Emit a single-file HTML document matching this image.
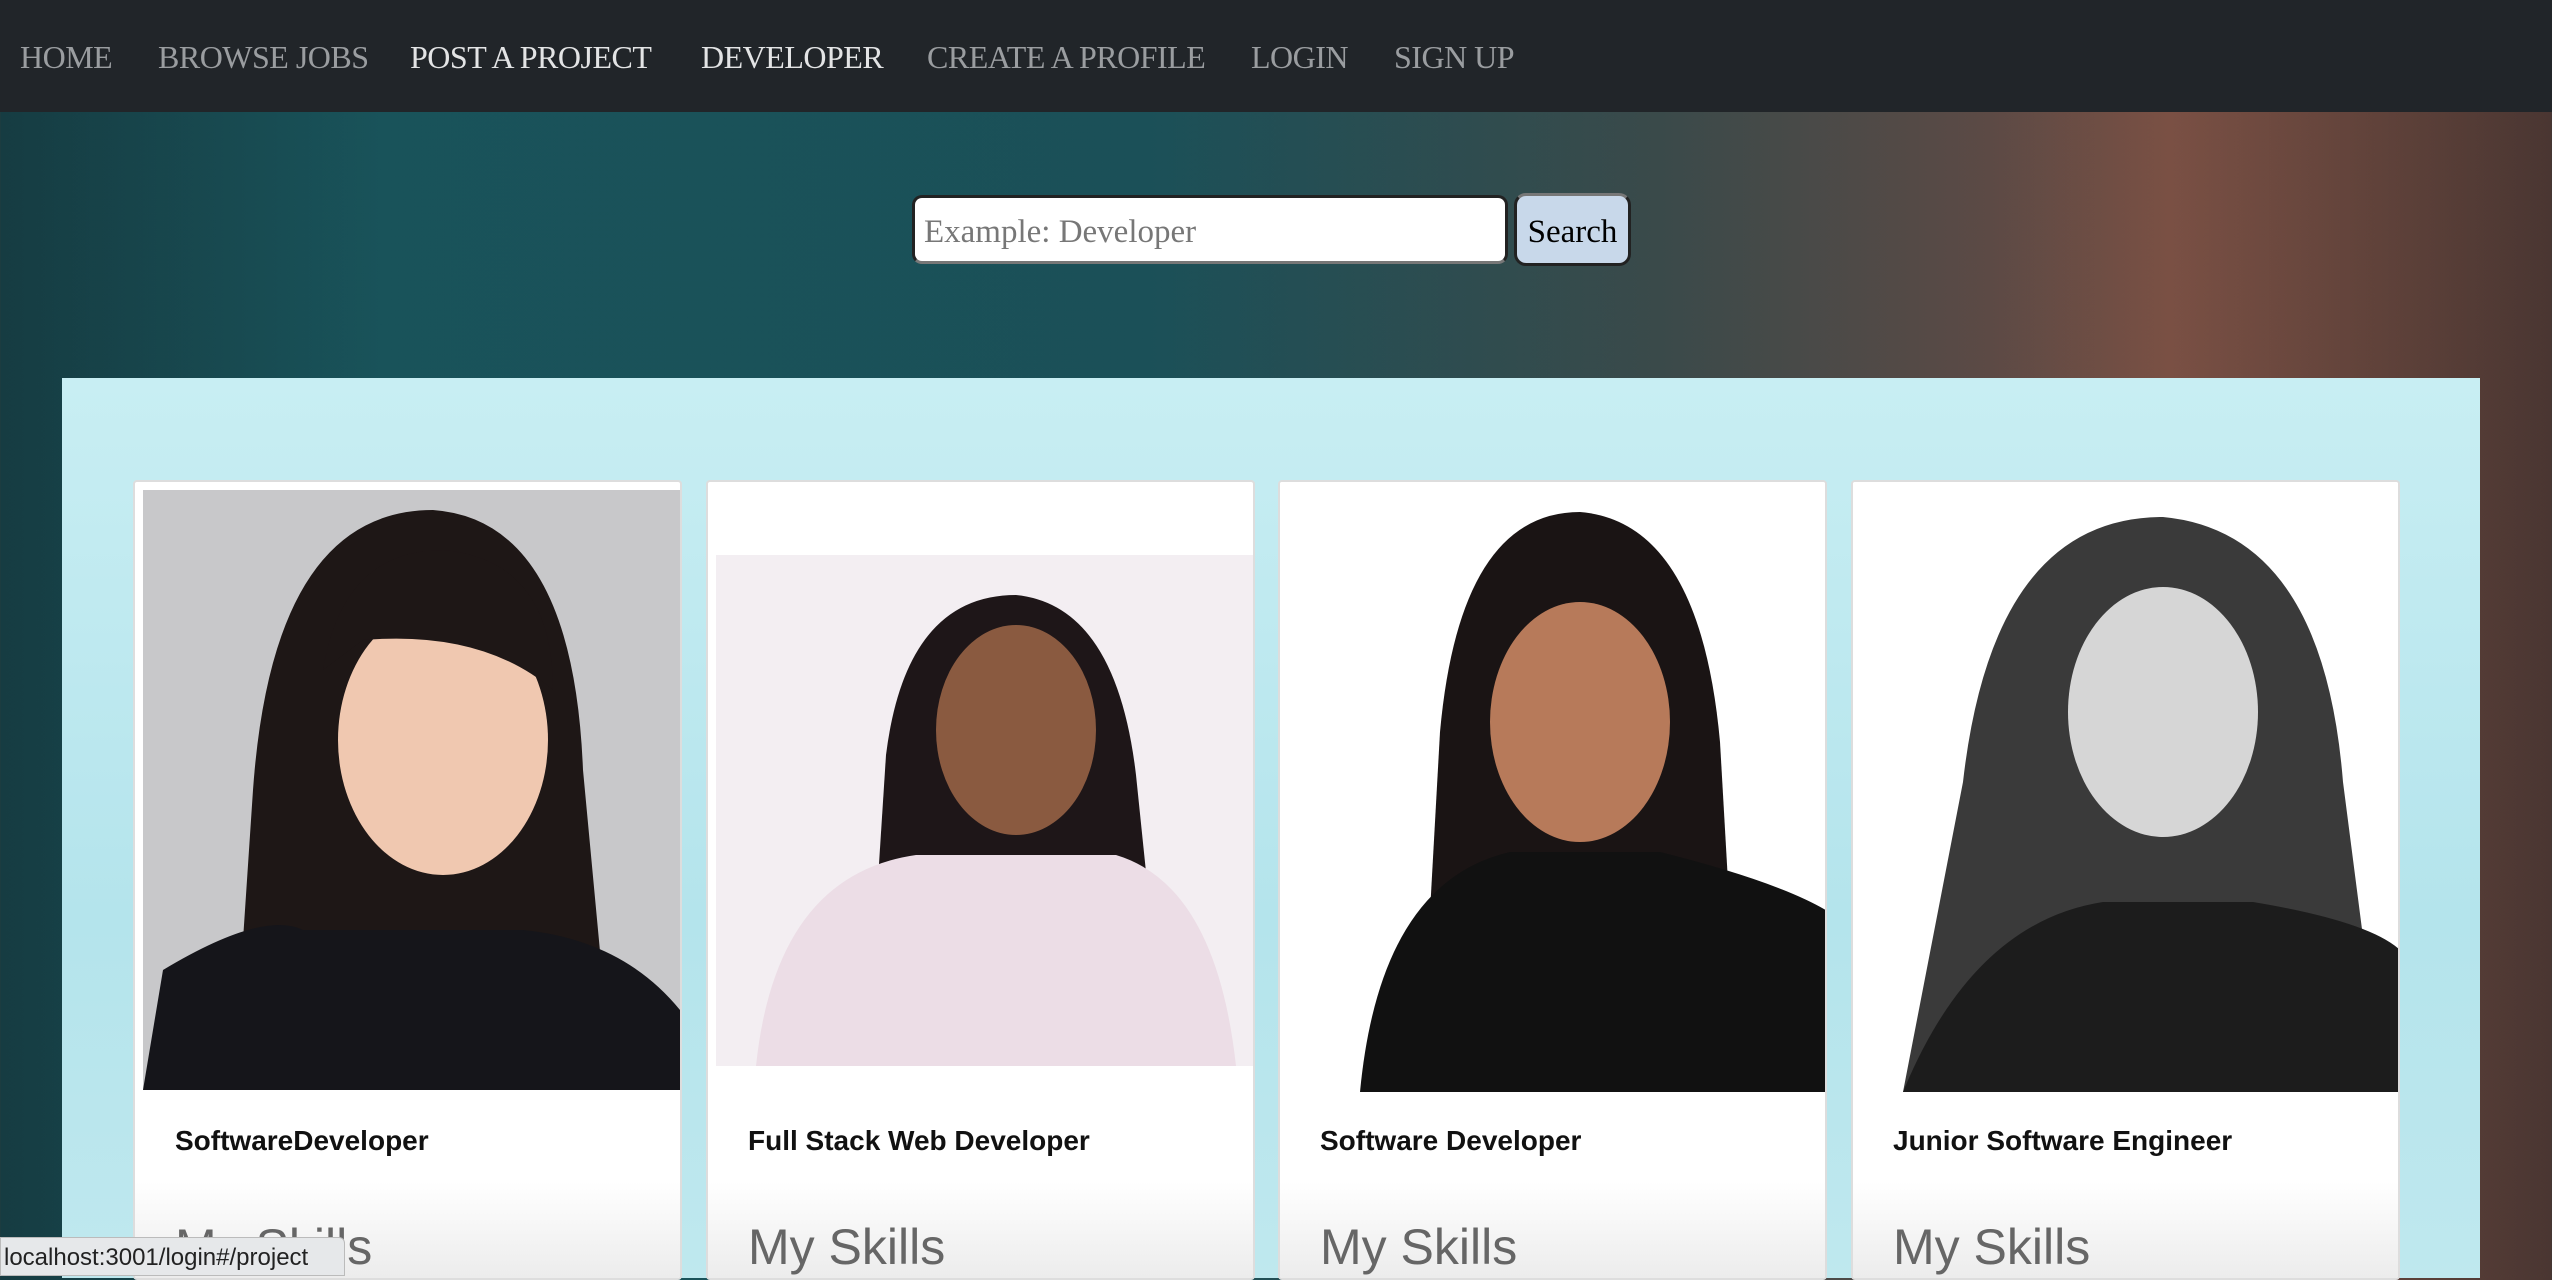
<!DOCTYPE html>
<html><head><style>
*{margin:0;padding:0;box-sizing:border-box}
body{width:2552px;height:1276px;overflow:hidden;position:relative;font-family:"Liberation Serif",serif;
background:linear-gradient(90deg,#163c42 0%,#19535a 15%,#1b5058 45%,#3a4a4a 65%,#5c4a45 78%,#7a5044 85%,#5a3f38 95%,#4a3632 100%);}
.nav{position:absolute;left:0;top:0;width:2552px;height:112px;background:#212529;}
.nav span{position:absolute;top:39px;font-size:32px;color:#9a9da0;letter-spacing:-0.5px}
.nav span.a{color:#e3e4e5}
.inp{position:absolute;left:912px;top:195px;width:596px;height:69px;background:#fff;border:3px solid #222;border-bottom-color:#777;border-radius:10px;font-size:33px;color:#777;padding:16px 0 0 9px}
.btn{position:absolute;left:1514px;top:193px;width:117px;height:73px;background:#c8d8ea;border:3px solid #222;border-top-color:#777;border-radius:12px;font-size:33px;color:#000;text-align:center;padding-top:18px}
.panel{position:absolute;left:62px;top:378px;width:2418px;height:900px;background:linear-gradient(180deg,#c8eef3,#b4e4ec 60%,#bfe8ee)}
.card{position:absolute;top:480px;width:549px;height:800px;background:#fff;border:2px solid #ddd;border-radius:4px;overflow:hidden}
.card .fade{position:absolute;left:0;right:0;top:700px;bottom:0;background:linear-gradient(180deg,#fff,#ececec)}
.t{position:absolute;left:40px;top:643px;font-family:"Liberation Sans",sans-serif;font-weight:bold;font-size:28px;color:#111}
.s{position:absolute;left:40px;top:736px;font-family:"Liberation Sans",sans-serif;font-size:50px;color:#666}
.img{position:absolute}
.status{position:absolute;left:0;top:1237px;width:345px;height:39px;background:#e6e8ea;border:1px solid #bbb;border-radius:0 6px 0 0;font-family:"Liberation Sans",sans-serif;font-size:24px;color:#222;padding:6px 0 0 3px}
</style></head><body>
<div class="nav">
<span style="left:20px">HOME</span>
<span style="left:158px">BROWSE JOBS</span>
<span class="a" style="left:410px">POST A PROJECT</span>
<span class="a" style="left:701px">DEVELOPER</span>
<span style="left:927px">CREATE A PROFILE</span>
<span style="left:1251px">LOGIN</span>
<span style="left:1394px">SIGN UP</span>
</div>
<div class="inp">Example: Developer</div>
<div class="btn">Search</div>
<div class="panel"></div>

<div class="card" style="left:133px">
<svg class="img" style="left:8px;top:8px" width="537" height="600" viewBox="0 0 537 600">
<rect width="537" height="600" fill="#c8c8ca"/>
<path d="M90 600 L110 300 Q130 20 290 20 Q430 30 440 280 L470 600Z" fill="#1e1716"/>
<path d="M0 600 L20 480 Q120 420 160 440 L380 440 Q480 450 537 520 L537 600Z" fill="#15151a"/>
<ellipse cx="300" cy="250" rx="105" ry="135" fill="#f0c8b0"/>
<path d="M180 180 Q200 60 300 60 Q410 70 410 200 Q340 140 220 150Z" fill="#1e1716"/>
</svg>
<div class="fade"></div>
<div class="t">SoftwareDeveloper</div><div class="s">My Skills</div></div>

<div class="card" style="left:706px">
<svg class="img" style="left:8px;top:73px" width="539" height="511" viewBox="0 0 539 511">
<rect width="539" height="511" fill="#f3eef2"/>
<path d="M150 511 L170 200 Q190 40 300 40 Q400 50 420 220 L450 511Z" fill="#1e1618"/>
<path d="M40 511 Q60 320 200 300 L400 300 Q500 330 520 511Z" fill="#ecdde6"/>
<ellipse cx="300" cy="175" rx="80" ry="105" fill="#8a5a40"/>
</svg>
<div class="fade"></div>
<div class="t">Full Stack Web Developer</div><div class="s">My Skills</div></div>

<div class="card" style="left:1278px">
<svg class="img" style="left:0;top:0" width="549" height="610" viewBox="0 0 549 610">
<rect width="549" height="610" fill="#fff"/>
<path d="M140 610 L160 250 Q180 30 300 30 Q420 40 440 260 L460 610Z" fill="#1a1414"/>
<path d="M80 610 Q100 400 230 370 L380 370 Q500 400 549 430 L549 610Z" fill="#111"/>
<ellipse cx="300" cy="240" rx="90" ry="120" fill="#b77a5a"/>
</svg>
<div class="fade"></div>
<div class="t">Software Developer</div><div class="s">My Skills</div></div>

<div class="card" style="left:1851px">
<svg class="img" style="left:0;top:0" width="549" height="610" viewBox="0 0 549 610">
<rect width="549" height="610" fill="#fff"/>
<path d="M50 610 L110 300 Q140 35 310 35 Q470 50 490 300 L530 610Z" fill="#3a3a3a"/>
<path d="M50 610 Q120 440 250 420 L400 420 Q520 440 549 470 L549 610Z" fill="#1c1c1c"/>
<ellipse cx="310" cy="230" rx="95" ry="125" fill="#d6d6d6"/>
</svg>
<div class="fade"></div>
<div class="t">Junior Software Engineer</div><div class="s">My Skills</div></div>

<div class="status">localhost:3001/login#/project</div>
</body></html>
